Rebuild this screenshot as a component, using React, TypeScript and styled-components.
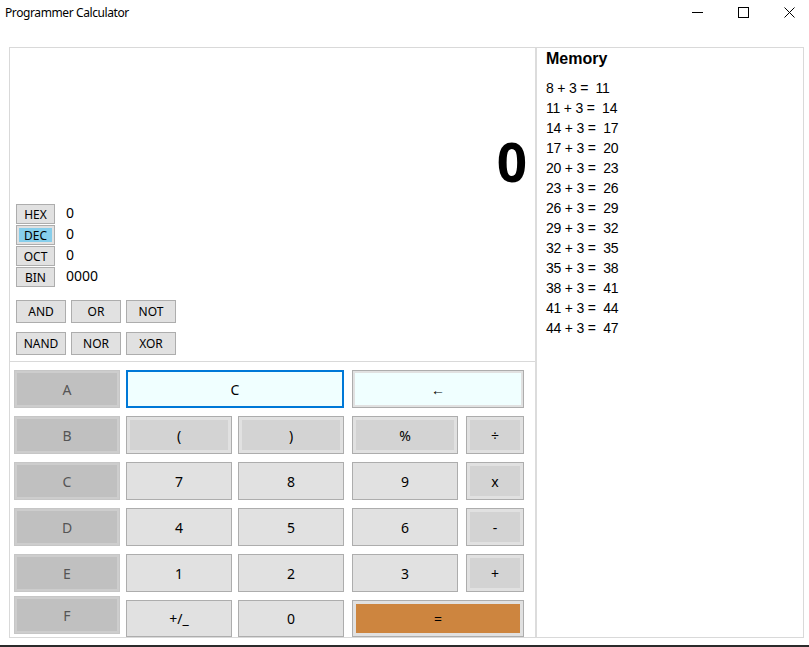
import React from "react";
import styled, { createGlobalStyle, css } from "styled-components";

const GlobalStyle = createGlobalStyle`
  html, body { margin: 0; padding: 0; background: #ffffff; }
  body { font-family: "Noto Sans", "Open Sans", sans-serif; overflow: hidden; }
  * { box-sizing: border-box; }
`;

const Window = styled.div`
  width: 809px;
  height: 647px;
  display: flex;
  flex-direction: column;
  background: #ffffff;
  border-bottom: 2px solid #2b2b2b;
`;

const TitleBar = styled.div`
  height: 24px;
  display: flex;
  align-items: center;
  padding-left: 5px;
`;

const Title = styled.span`
  font-size: 12px;
  color: #000;
  letter-spacing: -0.4px;
`;

const Controls = styled.div`
  margin-left: auto;
  display: flex;
  align-items: center;
  gap: 35px;
  padding-right: 14px;
`;

const ControlIcon = styled.svg`
  width: 11px;
  height: 11px;
  display: block;
`;

const Body = styled.div`
  flex: 1;
  padding: 23px 5px 0 9px;
`;

const Frame = styled.div`
  width: 795px;
  height: 591px;
  display: flex;
  border: 1px solid #d9d9d9;
`;

const LeftPanel = styled.div`
  width: 527px;
  display: flex;
  flex-direction: column;
  border-right: 2px solid #dcdcdc;
`;

const Display = styled.div`
  height: 152px;
  display: flex;
  align-items: flex-end;
  justify-content: flex-end;
  padding: 0 8px 12px 0;
`;

const BigNumber = styled.div`
  font-size: 53px;
  font-weight: 700;
  line-height: 1;
  color: #000;
`;

const BaseList = styled.div`
  margin-top: 4px;
  padding-left: 6px;
  display: grid;
  grid-template-columns: 39px auto;
  grid-auto-rows: 20px;
  column-gap: 11px;
  row-gap: 1px;
`;

const BaseButton = styled.div<{ $active?: boolean }>`
  border: 1px solid #adadad;
  background: #e1e1e1;
  font-size: 12px;
  line-height: 1;
  padding-top: 2px;
  color: #000;
  display: flex;
  align-items: center;
  justify-content: center;
  ${(p) =>
    p.$active &&
    css`
      background: #87ceeb;
      box-shadow: inset 0 0 0 2px #e1e1e1;
    `}
`;

const BaseValue = styled.div`
  font-size: 14px;
  line-height: 16px;
  padding-top: 1px;
  color: #000;
`;

const LogicGrid = styled.div`
  margin-top: 13px;
  padding: 0 0 6px 6px;
  display: grid;
  grid-template-columns: repeat(3, 50px);
  grid-auto-rows: 23px;
  column-gap: 5px;
  row-gap: 9px;
  border-bottom: 1px solid #d9d9d9;
`;

const LogicButton = styled.div`
  border: 1px solid #adadad;
  background: #e1e1e1;
  font-size: 12px;
  color: #000;
  display: flex;
  align-items: center;
  justify-content: center;
`;

const Keypad = styled.div`
  padding: 8px 0 0 4px;
  display: grid;
  grid-template-columns: 112px 112px 114px 114px 58px;
  grid-template-rows: repeat(5, 38px) 37px;
  row-gap: 8px;
`;

type Variant = "hex" | "clear" | "back" | "op" | "digit" | "equals";

const variants: Record<Variant, ReturnType<typeof css>> = {
  hex: css`
    border: 1px solid #c6c6c6;
    box-shadow: inset 0 0 0 2px #cdcdcd;
    background: #c0c0c0;
    color: #555;
  `,
  clear: css`
    border: 2px solid #0078d7;
    background: #f0ffff;
  `,
  back: css`
    border: 1px solid #adadad;
    box-shadow: inset 0 0 0 2px #e1e1e1;
    background: #f0ffff;
  `,
  op: css`
    border: 1px solid #adadad;
    box-shadow: inset 0 0 0 3px #e1e1e1;
    background: #d3d3d3;
  `,
  digit: css`
    border: 1px solid #adadad;
    background: #e1e1e1;
  `,
  equals: css`
    border: 1px solid #adadad;
    box-shadow: inset 0 0 0 3px #e1e1e1;
    background: #cd853f;
  `,
};

const Key = styled.div<{ $variant: Variant; $span?: number; $trail: number; $raised?: boolean }>`
  grid-column: span ${(p) => p.$span ?? 1};
  width: calc(100% - ${(p) => p.$trail}px);
  display: flex;
  align-items: center;
  justify-content: center;
  font-size: 14px;
  color: #000;
  ${(p) => variants[p.$variant]}
  ${(p) =>
    p.$raised &&
    css`
      align-self: start;
      height: 38px;
      margin-top: -4px;
    `}
`;

const MemoryPanel = styled.div`
  flex: 1;
  padding: 1px 9px;
  font-family: "Liberation Sans", Arial, sans-serif;
`;

const MemoryTitle = styled.div`
  font-size: 16px;
  font-weight: 700;
  line-height: 20px;
  color: #000;
  margin-bottom: 9px;
`;

const MemoryItem = styled.div`
  font-size: 14px;
  line-height: 20px;
  letter-spacing: -0.2px;
  white-space: pre;
  color: #000;
`;

const bases = [
  { name: "HEX", value: "0" },
  { name: "DEC", value: "0", active: true },
  { name: "OCT", value: "0" },
  { name: "BIN", value: "0000" },
];

const logic = ["AND", "OR", "NOT", "NAND", "NOR", "XOR"];

type KeyDef = { label: string; variant: Variant; span?: number; trail: number; raised?: boolean };

const keys: KeyDef[] = [
  { label: "A", variant: "hex", trail: 6 },
  { label: "C", variant: "clear", span: 2, trail: 8 },
  { label: "←", variant: "back", span: 2, trail: 0 },

  { label: "B", variant: "hex", trail: 6 },
  { label: "(", variant: "op", trail: 6 },
  { label: ")", variant: "op", trail: 8 },
  { label: "%", variant: "op", trail: 8 },
  { label: "÷", variant: "op", trail: 0 },

  { label: "C", variant: "hex", trail: 6 },
  { label: "7", variant: "digit", trail: 6 },
  { label: "8", variant: "digit", trail: 8 },
  { label: "9", variant: "digit", trail: 8 },
  { label: "x", variant: "op", trail: 0 },

  { label: "D", variant: "hex", trail: 6 },
  { label: "4", variant: "digit", trail: 6 },
  { label: "5", variant: "digit", trail: 8 },
  { label: "6", variant: "digit", trail: 8 },
  { label: "-", variant: "op", trail: 0 },

  { label: "E", variant: "hex", trail: 6 },
  { label: "1", variant: "digit", trail: 6 },
  { label: "2", variant: "digit", trail: 8 },
  { label: "3", variant: "digit", trail: 8 },
  { label: "+", variant: "op", trail: 0 },

  { label: "F", variant: "hex", trail: 6, raised: true },
  { label: "+/_", variant: "digit", trail: 6 },
  { label: "0", variant: "digit", trail: 8 },
  { label: "=", variant: "equals", span: 2, trail: 0 },
];

const memory: string[] = [];
for (let n = 8; n <= 44; n += 3) memory.push(`${n} + 3 =  ${n + 3}`);

export default function App() {
  return (
    <>
      <GlobalStyle />
      <Window>
        <TitleBar>
          <Title>Programmer Calculator</Title>
          <Controls>
            <ControlIcon viewBox="0 0 11 11">
              <line x1="0" y1="5.5" x2="11" y2="5.5" stroke="#000" strokeWidth="1" />
            </ControlIcon>
            <ControlIcon viewBox="0 0 11 11">
              <rect x="0.5" y="0.5" width="10" height="10" fill="none" stroke="#000" strokeWidth="1" />
            </ControlIcon>
            <ControlIcon viewBox="0 0 11 11">
              <path d="M0.5 0.5 L10.5 10.5 M10.5 0.5 L0.5 10.5" stroke="#000" strokeWidth="1" />
            </ControlIcon>
          </Controls>
        </TitleBar>
        <Body>
          <Frame>
            <LeftPanel>
              <Display>
                <BigNumber>0</BigNumber>
              </Display>
              <BaseList>
                {bases.map((b) => (
                  <React.Fragment key={b.name}>
                    <BaseButton $active={b.active}>{b.name}</BaseButton>
                    <BaseValue>{b.value}</BaseValue>
                  </React.Fragment>
                ))}
              </BaseList>
              <LogicGrid>
                {logic.map((l) => (
                  <LogicButton key={l}>{l}</LogicButton>
                ))}
              </LogicGrid>
              <Keypad>
                {keys.map((k, i) => (
                  <Key key={i} $variant={k.variant} $span={k.span} $trail={k.trail} $raised={k.raised}>
                    {k.label}
                  </Key>
                ))}
              </Keypad>
            </LeftPanel>
            <MemoryPanel>
              <MemoryTitle>Memory</MemoryTitle>
              {memory.map((m) => (
                <MemoryItem key={m}>{m}</MemoryItem>
              ))}
            </MemoryPanel>
          </Frame>
        </Body>
      </Window>
    </>
  );
}
